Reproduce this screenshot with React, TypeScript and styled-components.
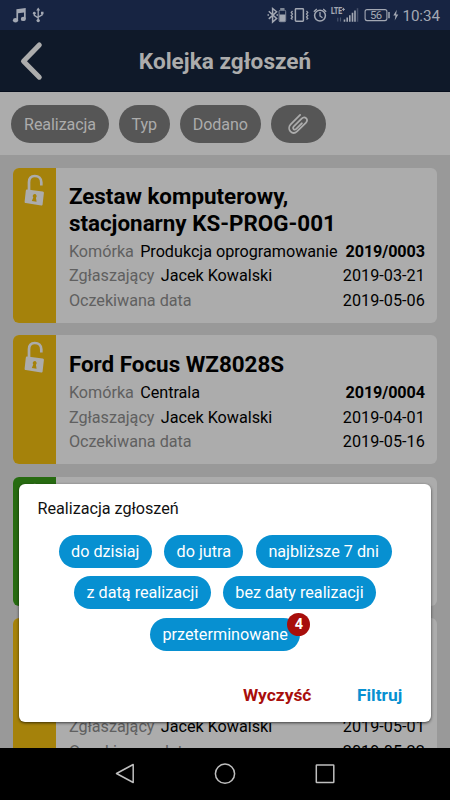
import React from "react";
import styled, { createGlobalStyle } from "styled-components";

const GlobalStyle = createGlobalStyle`
  * { box-sizing: border-box; }
  body { margin: 0; background: #000; font-family: Roboto, sans-serif; }
`;

const Screen = styled.div`
  position: relative;
  width: 450px;
  height: 800px;
  display: flex;
  flex-direction: column;
  overflow: hidden;
  background: #999;
`;

const StatusBar = styled.div`
  flex: none;
  height: 30px;
  padding: 0 10px 0 12px;
  display: flex;
  justify-content: space-between;
  background: #172442;
`;

const Clock = styled.span`
  width: 37.5px;
  font-size: 15.2px;
  letter-spacing: -0.1px;
  line-height: 32px;
  color: #a3a8b3;
`;

const StatusRight = styled.div`
  display: flex;
  gap: 2.8px;
`;

const Header = styled.header`
  flex: none;
  height: 62px;
  display: grid;
  grid-template-columns: 60px 1fr 60px;
  align-items: center;
  background: #0f1929;
  border-bottom: 1px solid #060e1d;
`;

const BackIcon = styled.svg`
  width: 60px;
  height: 62px;
`;

const Heading = styled.h1`
  margin: 0;
  padding-top: 2px;
  text-align: center;
  font-size: 22.6px;
  line-height: 60px;
  font-weight: 700;
  color: #acacac;
  white-space: nowrap;
`;

const FilterBar = styled.div`
  flex: none;
  height: 63px;
  padding: 13px 11.3px 0;
  display: flex;
  gap: 10px;
  background: #acacac;
`;

const FilterChip = styled.button<{ $width: number }>`
  width: ${(p) => p.$width}px;
  height: 37.5px;
  padding: 0;
  border: 0;
  border-radius: 19px;
  display: flex;
  align-items: center;
  justify-content: center;
  background: #565656;
  color: #acacac;
  font: 400 16.1px/38px Roboto, sans-serif;
  letter-spacing: -0.08px;

  span {
    padding-top: 2px;
  }
`;

const List = styled.main`
  flex: 1;
  min-height: 0;
  overflow: hidden;
  padding: 12.6px 12.6px 0;
  display: flex;
  flex-direction: column;
  gap: 12.6px;
`;

const Card = styled.article`
  flex: none;
  display: flex;
  border-radius: 6px;
  overflow: hidden;
  background: #acacac;
`;

const Stripe = styled.div<{ $color: string }>`
  flex: none;
  width: 43.3px;
  background: ${(p) => p.$color};
`;

const CardBody = styled.div`
  flex: 1;
  padding: 15.6px 12.6px 9.6px 13px;
`;

const CardTitle = styled.h2`
  margin: 0 0 3.8px;
  font-size: 22.4px;
  line-height: 26.4px;
  font-weight: 700;
  color: #000;
  white-space: pre-line;
`;

const Row = styled.div`
  height: 24.5px;
  display: flex;
  font-size: 16.2px;
  letter-spacing: -0.02px;
  line-height: 24.5px;
  color: #000;
  white-space: nowrap;
`;

const Label = styled.span`
  margin-right: 6.3px;
  color: #606060;
`;

const Value = styled.span<{ $bold?: boolean }>`
  margin-left: auto;
  font-weight: ${(p) => (p.$bold ? 700 : 400)};
  letter-spacing: ${(p) => (p.$bold ? -0.12 : 0.03)}px;
`;

const Dialog = styled.section`
  position: absolute;
  left: 18.6px;
  top: 484px;
  width: 412.6px;
  height: 238.4px;
  padding: 13px 19px 0;
  border-radius: 6px;
  background: #fff;
  box-shadow: 0 1px 3px rgba(0, 0, 0, 0.65);
`;

const DialogTitle = styled.h3`
  margin: 0 0 14.2px;
  font-size: 16.2px;
  letter-spacing: -0.03px;
  line-height: 24px;
  font-weight: 400;
  color: #111;
`;

const Options = styled.div`
  display: flex;
  flex-direction: column;
  gap: 8.2px;
`;

const OptionRow = styled.div`
  display: flex;
  justify-content: center;
  gap: 12.4px;
  padding-left: 0.5px;
`;

const Option = styled.button<{ $width: number }>`
  position: relative;
  width: ${(p) => p.$width}px;
  height: 33px;
  padding: 0;
  border: 0;
  border-radius: 17px;
  background: #0790d1;
  color: #fff;
  font: 400 16.2px/33.6px Roboto, sans-serif;
  white-space: nowrap;
`;

const Badge = styled.span`
  position: absolute;
  right: -10px;
  top: -5px;
  width: 23px;
  height: 23px;
  border-radius: 50%;
  background: #a80e0b;
  font-size: 14.5px;
  line-height: 23px;
  font-weight: 700;
`;

const Actions = styled.div`
  display: flex;
  justify-content: flex-end;
  gap: 45.5px;
  padding: 31.6px 10px 0 0;
`;

const Action = styled.button<{ $color: string }>`
  padding: 0;
  border: 0;
  background: none;
  color: ${(p) => p.$color};
  font: 700 17.4px/26px Roboto, sans-serif;
`;

const NavBar = styled.nav`
  flex: none;
  height: 52px;
  background: #000;
  display: flex;
  justify-content: center;
  gap: 76px;
  svg { margin-top: 14px; }
`;

const YELLOW = "#a5820b";
const GREEN = "#276b11";

type Ticket = {
  title: string;
  color: string;
  unit: string;
  number: string;
  created: string;
  due: string;
};

const tickets: Ticket[] = [
  { title: "Zestaw komputerowy,\nstacjonarny KS-PROG-001", color: YELLOW, unit: "Produkcja oprogramowanie", number: "2019/0003", created: "2019-03-21", due: "2019-05-06" },
  { title: "Ford Focus WZ8028S", color: YELLOW, unit: "Centrala", number: "2019/0004", created: "2019-04-01", due: "2019-05-16" },
  { title: "Drukarka", color: GREEN, unit: "Centrala", number: "2019/0005", created: "2019-04-12", due: "2019-05-20" },
  { title: "Zestaw komputerowy,\nstacjonarny", color: YELLOW, unit: "Centrala", number: "2019/0006", created: "2019-05-01", due: "2019-05-22" },
];

const Padlock = () => (
  <svg width="43" height="44" viewBox="0.600 0 43 44">
    <path d="M16.600 24.500V14.200C16.600 10 19 8 22.400 8c4 0 6.500 2.500 6.500 6.200v2" fill="none" stroke="#acacac" strokeWidth="2.700" strokeLinecap="square" />
    <path d="M14.800 21.600l15.500 2c.8.1 1.300.7 1.200 1.400l-1.300 11.600c-.1.700-.7 1.100-1.400 1L13.300 35.100c-.7-.1-1.200-.7-1.100-1.400l1.200-11c.1-.7.700-1.200 1.400-1.100z" fill="#acacac" />
    <path d="M22.200 26a2.100 2.100 0 0 1 1.300 3.700l.7 4-4.800-.6 1.500-3.600a2.100 2.100 0 0 1 1.300-3.500z" fill={YELLOW} />
  </svg>
);

const TicketCard = ({ ticket }: { ticket: Ticket }) => (
  <Card>
    <Stripe $color={ticket.color}>
      <Padlock />
    </Stripe>
    <CardBody>
      <CardTitle>{ticket.title}</CardTitle>
      <Row>
        <Label>Komórka</Label>
        {ticket.unit}
        <Value $bold>{ticket.number}</Value>
      </Row>
      <Row>
        <Label>Zgłaszający</Label>
        Jacek Kowalski
        <Value>{ticket.created}</Value>
      </Row>
      <Row>
        <Label>Oczekiwana data</Label>
        <Value>{ticket.due}</Value>
      </Row>
    </CardBody>
  </Card>
);

const NotificationIcons = () => (
  <svg width="34" height="30" viewBox="12 0 34 30" fill="#a3a8b3">
    <path d="M16.400 9.200L25.700 8v11.200h-1.700v-6.800l-5.900.8v7h-1.700z" />
    <ellipse cx="15.500" cy="20.200" rx="2.600" ry="2.200" />
    <ellipse cx="23.300" cy="18.900" rx="2.500" ry="2.200" />
    <path d="M38.200 9v11.500M34.300 13v2.300l3.900 2.600M42.200 13v1.800l-4 2.300" fill="none" stroke="#a3a8b3" strokeWidth="1.300" />
    <path d="M38.200 7.500l2 3h-4zM41 11.800h2.500v2.500H41z" />
    <circle cx="34.300" cy="13.200" r="1.400" />
    <circle cx="38.200" cy="20.600" r="1.700" />
  </svg>
);

const SystemIcons = () => (
  <svg width="134" height="30" viewBox="266.500 0 134 30" fill="none" stroke="#a3a8b3" strokeWidth="1.500">
    <path d="M269.300 11.300l7.800 7.200-4 3.500V8.500l4 3.200-7.800 7.200" />
    <path d="M268 15.100h1.500M277 15.100h1.500" />
    <path d="M280.700 9h4.300" />
    <rect x="279.600" y="10.300" width="6.600" height="11.400" rx="1" stroke="#7f8798" strokeWidth="1" />
    <path d="M280 14.500h5.800v7H280z" fill="#a3a8b3" stroke="none" />
    <rect x="295.900" y="8.800" width="8" height="12.400" rx=".7" />
    <path d="M293 11l-1.300 1.500 1.300 1.500-1.300 1.500 1.300 1.500-1.300 1.500 1.300 1M307 11l1.300 1.500-1.300 1.500 1.300 1.500-1.300 1.500 1.300 1.500-1.300 1" strokeWidth="1.200" />
    <circle cx="320.500" cy="15.600" r="5.400" />
    <path d="M320.500 12v4l2.500 1.800M314.300 11.800l3-2.700M326.700 11.800l-3-2.700" strokeWidth="1.300" />
    <text x="331.500" y="14" fill="#a3a8b3" stroke="#a3a8b3" strokeWidth=".2" fontSize="8.200" fontWeight="700" fontFamily="Roboto, sans-serif" textLength="11" lengthAdjust="spacingAndGlyphs">LTE</text>
    <path d="M342.500 9.400h3M344 7.900v3" strokeWidth=".9" />
    <path d="M338.300 21.500v-3.800M341 17.500v4" stroke="#4c5871" strokeWidth="1.100" />
    <path d="M345 21.800v-2.200M347.700 21.800v-4.200M350.300 21.800v-6.500M353 21.800v-9M355.500 21.800V10.500" strokeWidth="1.600" />
    <path d="M358 21.800V8.200" stroke="#46506a" strokeWidth="1.500" />
    <rect x="365.600" y="9.600" width="21.800" height="11" rx="2" strokeWidth="1.100" />
    <path d="M389.500 12v6.200" />
    <text x="370.500" y="19.200" fill="#a3a8b3" stroke="none" fontSize="11.300" fontFamily="Roboto, sans-serif" textLength="12">56</text>
    <path d="M397.300 9.800l-3.500 5.800h2.200l-.8 4.800 3.600-6h-2.200z" fill="#a3a8b3" stroke="none" />
  </svg>
);

const Clip = () => (
  <svg width="24" height="24" viewBox="0 0 24 24" fill="none" stroke="#acacac" strokeWidth="1.900" strokeLinecap="round">
    <path d="M13.600 1.800L3.400 12c-2.200 2.300-2.100 5.600-.3 7.500 2.100 2 5.100 1.900 7.200-.1l9.400-9.200c1.700-1.700 1.700-3.500.5-4.700-1.500-1.400-3.500-1.200-5 .3l-8.400 8.300c-1 1-1 2.100-.3 2.800.8.8 2 .6 2.900-.2l6.100-6" transform="translate(1.500 1.300) scale(.93)" />
  </svg>
);

export default function App() {
  return (
    <Screen>
      <GlobalStyle />
      <StatusBar>
        <NotificationIcons />
        <StatusRight>
          <SystemIcons />
          <Clock>10:34</Clock>
        </StatusRight>
      </StatusBar>
      <Header>
        <BackIcon viewBox="0 0 60 62">
          <path d="M39.300 15L23.500 31.300l15.800 15.900" fill="none" stroke="#acacac" strokeWidth="5" strokeLinecap="round" strokeLinejoin="round" />
        </BackIcon>
        <Heading>Kolejka zgłoszeń</Heading>
      </Header>
      <FilterBar>
        <FilterChip $width={97.5}>
          <span>Realizacja</span>
        </FilterChip>
        <FilterChip $width={51}>
          <span>Typ</span>
        </FilterChip>
        <FilterChip $width={81}>
          <span>Dodano</span>
        </FilterChip>
        <FilterChip $width={55} aria-label="Załącznik">
          <Clip />
        </FilterChip>
      </FilterBar>
      <List>
        {tickets.map((ticket) => (
          <TicketCard key={ticket.number} ticket={ticket} />
        ))}
      </List>
      <NavBar>
        <svg width="24" height="24" viewBox="0 0 24 24" fill="none" stroke="#bfbfbf" strokeWidth="1.500">
          <path d="M20.200 2.500v18L3.500 11.500z" strokeLinejoin="round" />
        </svg>
        <svg width="24" height="24" viewBox="0 0 24 24" fill="none" stroke="#bfbfbf" strokeWidth="1.500">
          <circle cx="12" cy="11.700" r="9.600" />
        </svg>
        <svg width="24" height="24" viewBox="0 0 24 24" fill="none" stroke="#bfbfbf" strokeWidth="1.500">
          <rect x="3.300" y="3" width="17.500" height="17.500" rx=".5" />
        </svg>
      </NavBar>
      <Dialog role="dialog">
        <DialogTitle>Realizacja zgłoszeń</DialogTitle>
        <Options>
          <OptionRow>
            <Option $width={93.3}>do dzisiaj</Option>
            <Option $width={79}>do jutra</Option>
            <Option $width={136}>najbliższe 7 dni</Option>
          </OptionRow>
          <OptionRow>
            <Option $width={136.3}>z datą realizacji</Option>
            <Option $width={153}>bez daty realizacji</Option>
          </OptionRow>
          <OptionRow>
            <Option $width={150.5}>
              przeterminowane
              <Badge>4</Badge>
            </Option>
          </OptionRow>
        </Options>
        <Actions>
          <Action $color="#a80e0b">Wyczyść</Action>
          <Action $color="#0790d1">Filtruj</Action>
        </Actions>
      </Dialog>
    </Screen>
  );
}
